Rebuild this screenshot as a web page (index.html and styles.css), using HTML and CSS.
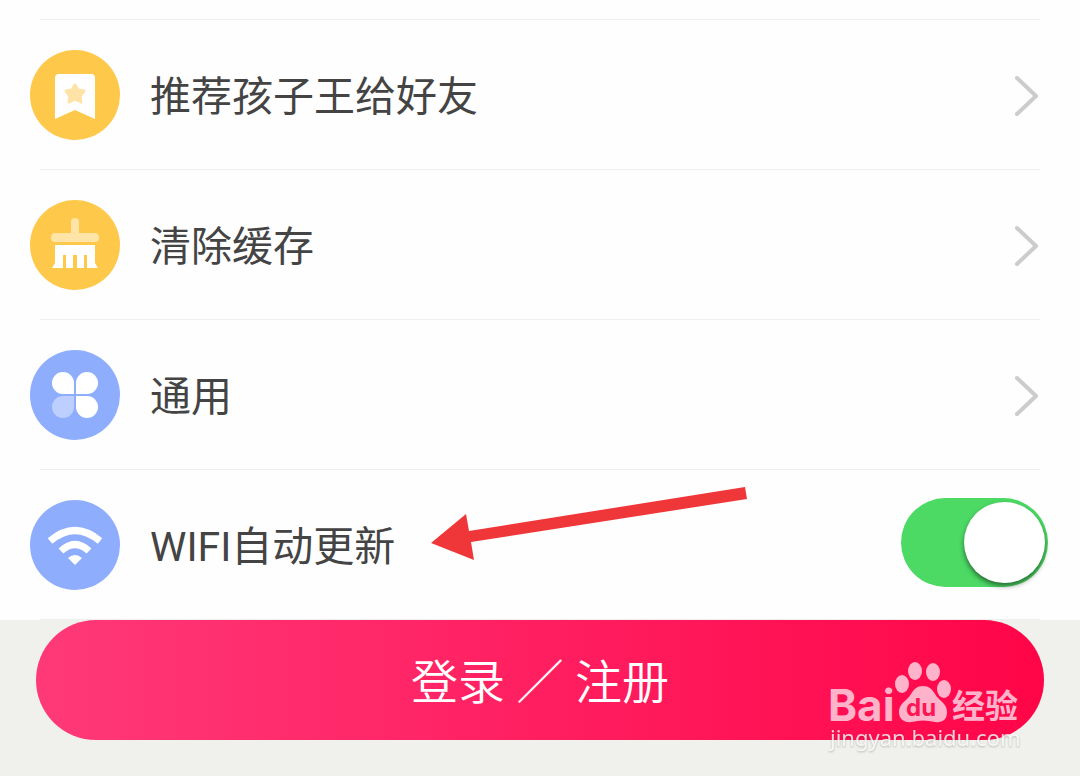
FILE: index.html
```html
<!DOCTYPE html>
<html lang="zh-CN">
<head>
    <meta charset="utf-8">
    <title>设置</title>
    <meta name="viewport" content="width=device-width, initial-scale=1.0">
    <link rel="stylesheet" href="styles.css">
</head>
<body>
    <!-- Settings list -->
    <ul class="settings">
        <li class="item">
            <a class="row" href="#recommend">
                <svg class="icon" viewBox="0 0 90 90" aria-hidden="true">
                    <circle cx="45" cy="45" r="45" fill="#fec84b"/>
                    <path d="M29 24h32q4 0 4 4v41L45 60 25 69V28q0-4 4-4z" fill="#fff"/>
                    <path d="M45 35l3 5 6 1-4 5 1 6-6-3-6 3 1-6-4-5 6-1z" fill="#fee2a6" stroke="#fee2a6" stroke-width="3" stroke-linejoin="round"/>
                </svg>
                <span class="label">推荐孩子王给好友</span>
                <svg class="chevron" viewBox="0 0 26 42" aria-hidden="true"><path d="M3 4l19 18L3 40"/></svg>
            </a>
        </li>
        <li class="item">
            <a class="row" href="#cache">
                <svg class="icon" viewBox="0 0 90 90" aria-hidden="true">
                    <circle cx="45" cy="45" r="45" fill="#fec84b"/>
                    <path d="M41 33V22q0-4 4-4t4 4v11h16q4 0 4 4.500t-4 4.500H25q-4 0-4-4.500t4-4.500z" fill="#fee4a7"/>
                    <path d="M25 45h40v18l3 5H57V55h-3v13h-7V55h-4v13h-7V55h-3v13H22l3-5z" fill="#fff"/>
                </svg>
                <span class="label">清除缓存</span>
                <svg class="chevron" viewBox="0 0 26 42" aria-hidden="true"><path d="M3 4l19 18L3 40"/></svg>
            </a>
        </li>
        <li class="item">
            <a class="row" href="#general">
                <svg class="icon" viewBox="0 0 90 90" aria-hidden="true">
                    <circle cx="45" cy="45" r="45" fill="#8fadfd"/>
                    <path d="M44 44H33a11 11 0 1 1 11-11z" fill="#fff"/>
                    <path d="M46 44V33a11 11 0 1 1 11 11z" fill="#fff"/>
                    <path d="M46 46h11a11 11 0 1 1-11 11z" fill="#fff"/>
                    <path d="M44 46v11a11 11 0 1 1-11-11z" fill="#bccffe"/>
                </svg>
                <span class="label">通用</span>
                <svg class="chevron" viewBox="0 0 26 42" aria-hidden="true"><path d="M3 4l19 18L3 40"/></svg>
            </a>
        </li>
        <li class="item">
            <div class="row row-switch">
                <svg class="icon" viewBox="0 0 90 90" aria-hidden="true">
                    <circle cx="45" cy="45" r="45" fill="#8fadfd"/>
                    <path d="M20 41q25-21 50 0" fill="none" stroke="#fff" stroke-width="7"/>
                    <path d="M31 51q14-13 28 0" fill="none" stroke="#fff" stroke-width="7"/>
                    <path d="M38 58q7-6 14 0l-7 7z" fill="#fff"/>
                </svg>
                <label class="label" for="wifi">WIFI自动更新</label>
                <input class="switch" type="checkbox" id="wifi" checked>
            </div>
            <svg class="arrow" viewBox="0 0 318 76" aria-hidden="true">
                <path d="M1 56L36 27l3 17L315 0l2 12L41 55l3 18z" fill="#ef3639"/>
            </svg>
        </li>
    </ul>

    <!-- Login button -->
    <div class="footer">
        <button class="login" type="button">登录 ／ 注册</button>
        <svg class="watermark" viewBox="0 0 200 96" role="img" aria-label="Baidu">
            <g class="brand">
                <text class="bai" x="1" y="61">Bai</text>
                <ellipse cx="75" cy="24" rx="7" ry="9"/>
                <ellipse cx="88" cy="11" rx="7" ry="9"/>
                <ellipse cx="106" cy="12" rx="7" ry="9"/>
                <ellipse cx="117" cy="29" rx="7" ry="9"/>
                <path d="M96 26c6 0 9 3 12 8 4 7 12 9 12 18 0 8-5 11-12 10q-12-3-23 0c-8 1-13-3-13-10 0-9 8-11 12-18 3-5 6-8 12-8z"/>
                <text class="jingyan" x="125" y="58">经验</text>
                <text class="du" x="79" y="56">du</text>
            </g>
            <text class="site" x="3" y="86">jingyan.baidu.com</text>
        </svg>
    </div>
</body>
</html>
```
FILE: styles.css
```css
* {
    box-sizing: border-box;
}
body {
    margin: 0;
    min-height: 100vh;
    display: flex;
    flex-direction: column;
    background: #f0f1ec;
    color: #444;
    font-family: Roboto, "Noto Sans CJK SC", sans-serif;
}
.settings {
    margin: 0;
    padding: 19px 0 0;
    list-style: none;
    background: #fefefe;
}
/* divider lines */
.settings::before,
.item::after {
    content: "";
    display: block;
    height: 1px;
    margin: 0 40px;
    background: #eee;
}
.item {
    position: relative;
}
.row {
    display: flex;
    align-items: center;
    gap: 30px;
    min-height: 149px;
    padding: 0 40px 0 30px;
    color: inherit;
    text-decoration: none;
}
.row-switch {
    padding-right: 32px;
}
.icon {
    flex: none;
    width: 90px;
    height: 90px;
}
.label {
    flex: 1;
    padding-top: 5px;
    font-size: 41px;
    line-height: 60px;
}
.chevron {
    flex: none;
    width: 26px;
    height: 42px;
    fill: none;
    stroke: #ccc;
    stroke-width: 4;
    stroke-linecap: round;
    stroke-linejoin: round;
}
.switch {
    appearance: none;
    display: flex;
    align-items: center;
    flex: none;
    width: 147px;
    height: 89px;
    margin: 0 0 4px;
    padding: 0 3px;
    border-radius: 45px;
    background: #ccc;
    cursor: pointer;
}
.switch::before {
    content: "";
    width: 81px;
    height: 81px;
    border-radius: 50%;
    background: #fff;
    box-shadow: 0 3px 5px rgba(0, 0, 0, 0.5);
}
.switch:checked {
    justify-content: flex-end;
    background: #4cd964;
}
/* pointer drawn over the row */
.arrow {
    position: absolute;
    left: 430px;
    top: 17px;
    width: 318px;
    height: 76px;
    pointer-events: none;
}
.footer {
    position: relative;
    flex: 1;
    padding: 0 36px 36px;
}
.login {
    display: block;
    width: 100%;
    height: 120px;
    padding: 0 0 4px;
    border: none;
    border-radius: 60px;
    background: linear-gradient(to right, #ff3979, #ff0548);
    color: #fff;
    font-family: inherit;
    font-size: 47px;
    font-weight: 350;
    cursor: pointer;
}
.watermark {
    position: absolute;
    right: 53px;
    top: 40px;
    width: 200px;
    height: 96px;
    pointer-events: none;
}
.brand {
    fill: #ffb3cb;
}
.bai {
    font: 700 44px Inter, sans-serif;
}
.jingyan {
    font: 700 33px "Noto Sans CJK SC", sans-serif;
}
.du {
    font: 700 24px Inter, sans-serif;
    fill: #ff1454;
}
.site {
    font: 22px "Noto Sans", sans-serif;
    fill: rgba(255, 255, 255, 0.8);
    filter: drop-shadow(0 1px 1px rgba(0, 0, 0, 0.3));
}
```
